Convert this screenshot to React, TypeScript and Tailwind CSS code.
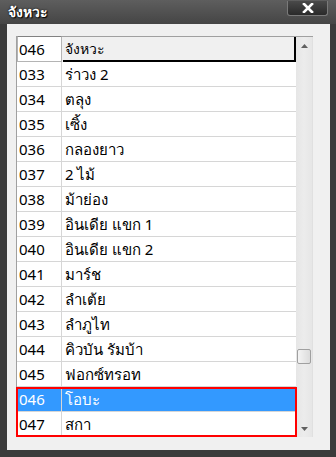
import React from "react";

const rows: [string, string][] = [
  ["033", "ร่าวง 2"],
  ["034", "ตลุง"],
  ["035", "เซิ้ง"],
  ["036", "กลองยาว"],
  ["037", "2 ไม้"],
  ["038", "ม้าย่อง"],
  ["039", "อินเดีย แขก 1"],
  ["040", "อินเดีย แขก 2"],
  ["041", "มาร์ช"],
  ["042", "ลำเต้ย"],
  ["043", "ลำภูไท"],
  ["044", "คิวบัน รัมบ้า"],
  ["045", "ฟอกซ์ทรอท"],
];

const font = { fontFamily: 'Tahoma, "Noto Sans", "DejaVu Sans", sans-serif' };

function Row({ code, name, sel }: { code: string; name: string; sel?: boolean }) {
  return (
    <div
      className={`flex h-[25px] border-b border-[#d6d6d6] text-[15px] ${
        sel ? "bg-[#3399ff] text-white" : "bg-white text-black"
      }`}
    >
      <div className="w-[45px] border-r border-[#d6d6d6] pl-[2px] flex items-center leading-none">{code}</div>
      <div className="flex-1 pl-[3px] flex items-center leading-none">{name}</div>
    </div>
  );
}

export default function App() {
  return (
    <div className="w-[336px] h-[457px] bg-[#3b3b3b] flex flex-col" style={font}>
      <div className="h-[25px] flex items-start justify-between bg-gradient-to-b from-[#5e5e5e] to-[#454545]">
        <div
          className="pl-[8px] pt-[5px] text-white text-[14px] font-bold leading-none"
          style={{ textShadow: "1px 1px 1px #000, 0 0 2px #000" }}
        >
          จังหวะ
        </div>
        <div className="mr-[8px] mt-[1px] w-[41px] h-[15px] bg-gradient-to-b from-[#4a4a4a] to-[#2a2a2a] border border-[#7a7a7a] border-t-0 rounded-b-[3px] flex items-center justify-center">
          <svg width="12" height="10" viewBox="0 0 12 10">
            <path d="M2 1 L10 9 M10 1 L2 9" stroke="#fff" strokeWidth="2.6" strokeLinecap="square" />
          </svg>
        </div>
      </div>
      <div className="flex-1 ml-[7px] mr-[6px] mb-[7px] bg-[#f0f0f0] pl-[9px] pt-[12px] pr-[17px] pb-[13px] flex">
        <div className="flex-1 flex border-t border-[#a0a0a0]">
          <div className="flex-1 flex flex-col border-l border-[#a0a0a0]">
            <div className="flex h-[25px]">
              <div className="w-[45px] bg-white border border-[#b4b4b4] border-t-[#828282] -mt-[1px] flex items-center pl-[1px] text-[15px] leading-none">
                046
              </div>
              <div className="flex-1 bg-[#f0f0f0] border-b-2 border-r-2 border-black ml-[1px] flex items-center pl-[2px] text-[14px] leading-none">
                จังหวะ
              </div>
            </div>
            {rows.map(([c, n]) => (
              <Row key={c} code={c} name={n} />
            ))}
            <div className="relative">
              <Row code="046" name="โอบะ" sel />
              <Row code="047" name="สกา" />
              <div className="absolute -left-[1px] -right-[1px] top-0 bottom-0 border-2 border-[#ff0000] pointer-events-none" />
            </div>
          </div>
          <div className="w-[17px] bg-gradient-to-r from-[#e6e6e6] via-[#ececec] to-[#e6e6e6] flex flex-col items-center justify-between border-r border-[#e0e0e0]">
            <div className="h-[17px] flex items-center justify-center">
              <svg width="7" height="4" viewBox="0 0 7 4">
                <path d="M0 4 L3.5 0 L7 4 Z" fill="#606060" />
              </svg>
            </div>
            <div className="flex-1 w-full flex flex-col justify-end pb-[56px]">
              <div className="h-[15px] mx-[1px] rounded-[2px] border border-[#a0a0a0] bg-gradient-to-r from-[#f4f4f4] to-[#dcdcdc]" />
            </div>
            <div className="h-[17px] flex items-center justify-center">
              <svg width="7" height="4" viewBox="0 0 7 4">
                <path d="M0 0 L3.5 4 L7 0 Z" fill="#606060" />
              </svg>
            </div>
          </div>
        </div>
      </div>
    </div>
  );
}
